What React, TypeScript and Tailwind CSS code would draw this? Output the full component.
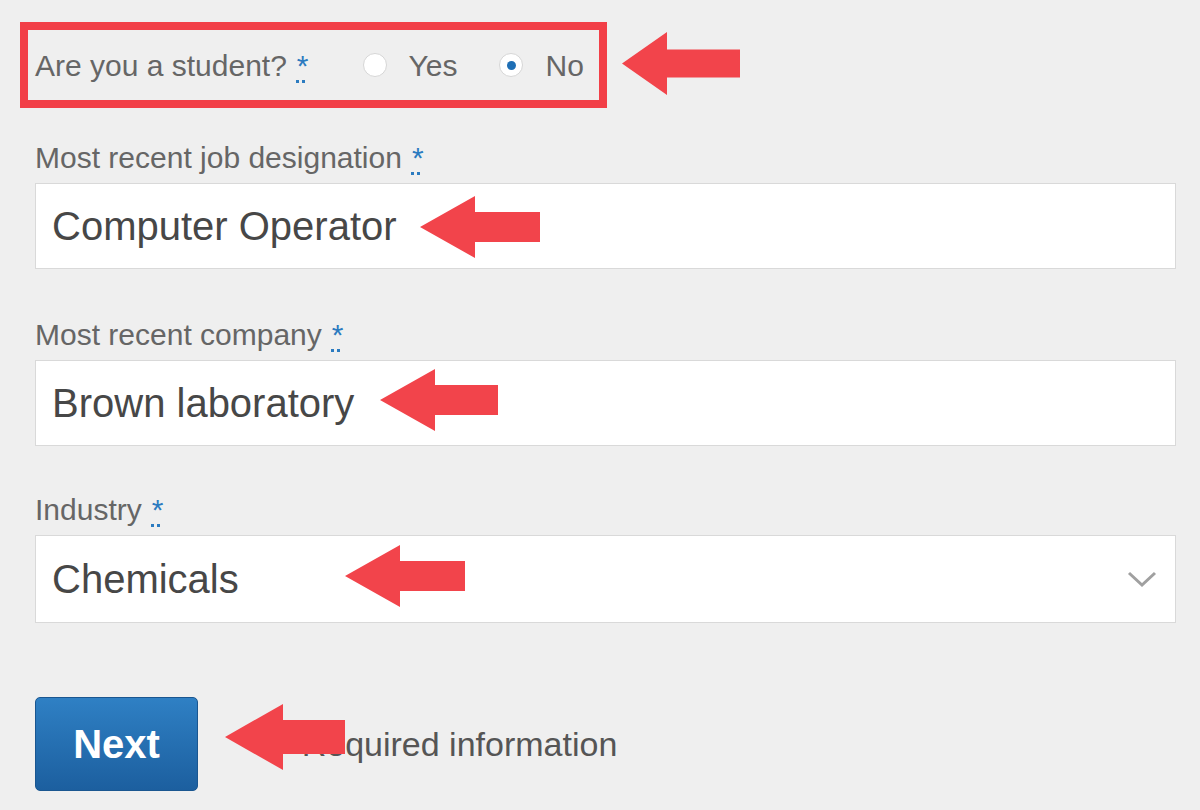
import React from 'react';

type ArrowProps = { className: string; w: number; h: number; head: number; shaft: number };

// red annotation arrow pointing left
const Arrow = ({ className, w, h, head, shaft }: ArrowProps) => {
  const a = (h - shaft) / 2;
  const b = (h + shaft) / 2;
  const pts = `0,${h / 2} ${head},0 ${head},${a} ${w},${a} ${w},${b} ${head},${b} ${head},${h}`;
  return (
    <svg className={className} width={w} height={h} viewBox={`0 0 ${w} ${h}`}>
      <polygon points={pts} fill="#f2444b" />
    </svg>
  );
};

const Req = () => (
  <span className="ml-[10px] text-[#2b7bc0] underline decoration-dotted underline-offset-4">*</span>
);

const Radio = ({ checked }: { checked?: boolean }) => (
  <span className="w-[24px] h-[24px] rounded-full bg-white border border-[#d6d6d6] flex items-center justify-center">
    {checked && <span className="w-[9px] h-[9px] rounded-full bg-[#1f6fb5]" />}
  </span>
);

const Field = ({ label, value, select }: { label: string; value: string; select?: boolean }) => (
  <div className="flex flex-col">
    <label className="ml-[15px] text-[30px] leading-[32px] text-[#666]">
      {label}
      <Req />
    </label>
    <div
      className={`ml-[15px] mt-[9px] w-[1141px] bg-white border border-[#d9d9d9] flex items-center justify-between pl-[16px] pr-[18px] ${
        select ? 'h-[88px]' : 'h-[86px]'
      }`}
    >
      <span className="text-[40px] text-[#474747]">{value}</span>
      {select && (
        <svg width="30" height="18" viewBox="0 0 30 18">
          <polyline points="2,3 15,15 28,3" fill="none" stroke="#a0a0a0" strokeWidth="3" />
        </svg>
      )}
    </div>
  </div>
);

export default function App() {
  return (
    <div className="relative w-[1200px] h-[810px] overflow-hidden bg-[#efefef] font-['Liberation_Sans',Arial,sans-serif]">
      <div className="flex flex-col pt-[22px] pl-[20px]">
        <div className="w-[587px] h-[86px] border-[8px] border-[#f23f47] flex items-center pl-[7px] text-[30px] text-[#666]">
          <span>
            Are you a student?
            <Req />
          </span>
          <span className="ml-[54px]">
            <Radio />
          </span>
          <span className="ml-[22px]">Yes</span>
          <span className="ml-[42px]">
            <Radio checked />
          </span>
          <span className="ml-[22px]">No</span>
        </div>

        <div className="mt-[34px]">
          <Field label="Most recent job designation" value="Computer Operator" />
        </div>
        <div className="mt-[50px]">
          <Field label="Most recent company" value="Brown laboratory" />
        </div>
        <div className="mt-[48px]">
          <Field label="Industry" value="Chemicals" select />
        </div>

        <div className="mt-[74px] ml-[15px] flex items-center">
          <button className="w-[163px] h-[94px] rounded-[5px] bg-gradient-to-b from-[#2f80c4] to-[#1c5f9f] border border-[#1a5690] text-white font-bold text-[40px]">
            Next
          </button>
          <span className="ml-[81px] text-[34px] text-[#555]">* Required information</span>
        </div>
      </div>

      <Arrow className="absolute left-[622px] top-[32px]" w={118} h={63} head={45} shaft={28} />
      <Arrow className="absolute left-[420px] top-[196px]" w={120} h={62} head={55} shaft={30} />
      <Arrow className="absolute left-[380px] top-[369px]" w={118} h={62} head={55} shaft={30} />
      <Arrow className="absolute left-[345px] top-[545px]" w={120} h={62} head={55} shaft={30} />
      <Arrow className="absolute left-[225px] top-[704px]" w={120} h={66} head={58} shaft={34} />
    </div>
  );
}
